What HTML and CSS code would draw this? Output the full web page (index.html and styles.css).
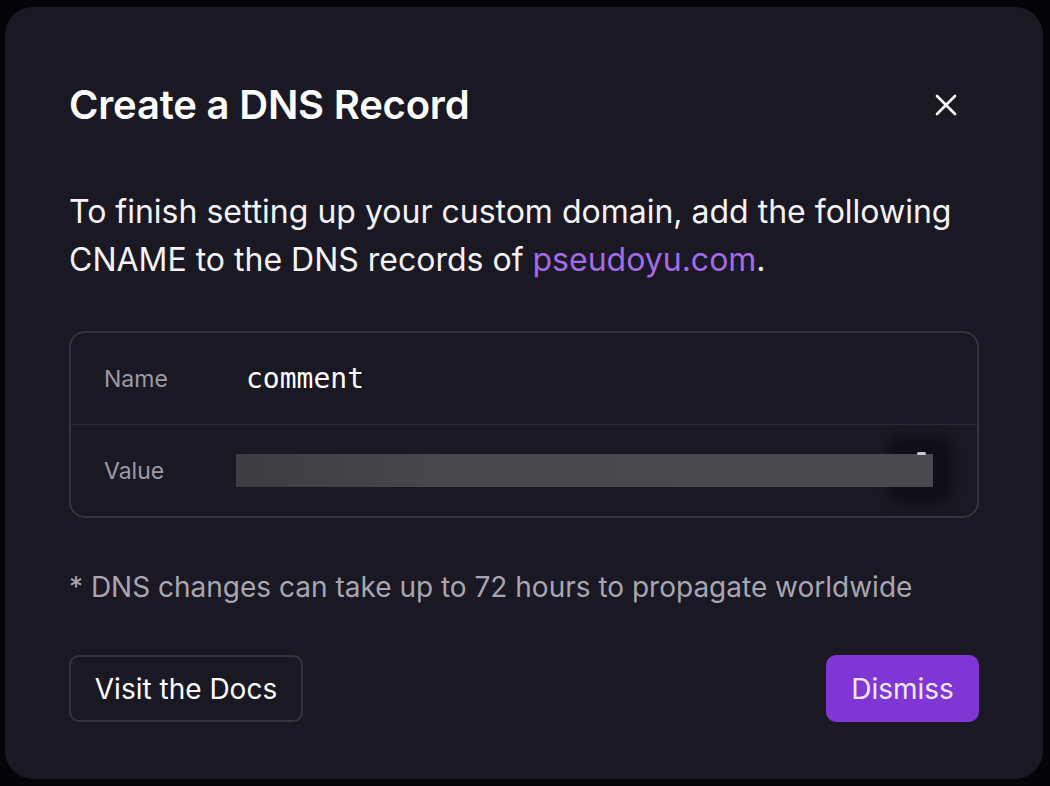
FILE: index.html
```html
<!DOCTYPE html>
<html>
<head>
<meta charset="utf-8">
<link rel="stylesheet" href="styles.css">
</head>
<body>
<div class="modal">
  <div class="header">
    <h1 class="title">Create a DNS Record</h1>
    <button class="close" aria-label="Close">
      <svg width="22" height="22" viewBox="0 0 22 22"><path d="M2 2 L20 20 M20 2 L2 20" stroke="#fff" stroke-width="2.6" stroke-linecap="round"/></svg>
    </button>
  </div>
  <p class="intro">To finish setting up your custom domain, add the following CNAME to the DNS records of <span class="link">pseudoyu.com</span>.</p>
  <div class="record">
    <div class="row">
      <span class="label">Name</span>
      <span class="mono">comment</span>
    </div>
    <div class="row row-value">
      <span class="label">Value</span>
      <div class="value-wrap">
        <div class="copy"></div>
        <div class="blur-bar"></div>
        <div class="glint"></div>
      </div>
    </div>
  </div>
  <p class="note">* DNS changes can take up to 72 hours to propagate worldwide</p>
  <div class="actions">
    <button class="btn btn-outline">Visit the Docs</button>
    <button class="btn btn-primary">Dismiss</button>
  </div>
</div>
</body>
</html>
```
FILE: styles.css
```css
html, body {
  margin: 0;
  padding: 0;
  background: #050507;
}
body {
  width: 1050px;
  height: 786px;
  overflow: hidden;
  font-family: Inter, "Noto Sans", sans-serif;
}
.modal {
  box-sizing: border-box;
  margin: 7px 7px 0 5px;
  width: 1038px;
  height: 772px;
  background: #1a1822;
  border-radius: 28px;
  padding: 78px 64px 0 64px;
  color: #fff;
}
.header {
  display: flex;
  align-items: center;
  justify-content: space-between;
}
.title {
  margin: 0;
  font-size: 40px;
  line-height: 40px;
  font-weight: 600;
  letter-spacing: -0.2px;
}
.close {
  background: none;
  border: none;
  padding: 0;
  margin-right: 22px;
  width: 22px;
  height: 22px;
  display: flex;
}
.intro {
  margin: 63px 0 0 0;
  font-size: 32px;
  line-height: 48px;
  color: #f4f3f7;
}
.link {
  color: #a56ae6;
}
.record {
  margin-top: 47px;
  border: 2px solid #35333e;
  border-radius: 16px;
}
.row {
  display: flex;
  align-items: center;
  height: 91px;
  padding-left: 33px;
}
.row + .row {
  border-top: 1px solid #2a2833;
}
.label {
  width: 142px;
  font-size: 23px;
  color: #9d9aa7;
}
.mono {
  font-family: "DejaVu Sans Mono", "Liberation Mono", monospace;
  font-size: 28px;
  color: #fff;
}
.row-value .label {
  width: 132px;
}
.value-wrap {
  position: relative;
  z-index: 0;
  display: flex;
  align-items: center;
}
.blur-bar {
  width: 697px;
  height: 33px;
  background: linear-gradient(90deg, #3e3d42 0%, #48474c 30%, #4a494e 100%);
  filter: blur(0.6px);
}
.copy {
  position: absolute;
  right: -18px;
  top: -17px;
  width: 62px;
  height: 66px;
  border-radius: 12px;
  background: #100e17;
  filter: blur(5px);
  z-index: -1;
}
.glint {
  position: absolute;
  right: 7px;
  top: -2px;
  width: 9px;
  height: 3px;
  border-radius: 2px;
  background: #c9c8cf;
}
.note {
  margin: 53px 0 0 0;
  font-size: 28px;
  line-height: 32px;
  color: #a8a5b1;
}
.actions {
  margin-top: 52px;
  display: flex;
  justify-content: space-between;
}
.btn {
  font-family: Inter, "Noto Sans", sans-serif;
  font-size: 28px;
  height: 67px;
  border-radius: 10px;
  padding: 0;
  cursor: pointer;
}
.btn-outline {
  background: transparent;
  border: 2px solid #35333e;
  color: #fff;
  width: 234px;
}
.btn-primary {
  background: #8036d4;
  border: none;
  color: #f3e9ff;
  width: 153px;
}
```
